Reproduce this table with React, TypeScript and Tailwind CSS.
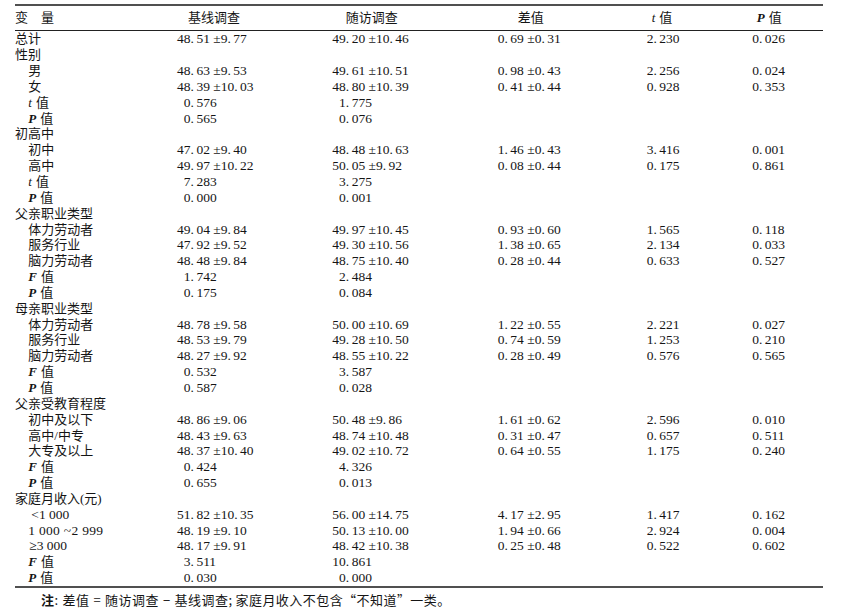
import React from "react";

type Row = {
  label: React.ReactNode;
  indent?: boolean;
  v?: string[];
};

const Stat = ({ s }: { s: "t" | "P" | "F" }) => (
  <span>
    <span className={s === "t" ? "italic" : "italic font-bold"} style={{ fontFamily: "'Liberation Serif', serif" }}>
      {s}
    </span>
    <span className="ml-[4px]">值</span>
  </span>
);

const rows: Row[] = [
  { label: "总计", v: ["48.51 ±9.77", "49.20 ±10.46", "0.69 ±0.31", "2.230", "0.026"] },
  { label: "性别" },
  { label: "男", indent: true, v: ["48.63 ±9.53", "49.61 ±10.51", "0.98 ±0.43", "2.256", "0.024"] },
  { label: "女", indent: true, v: ["48.39 ±10.03", "48.80 ±10.39", "0.41 ±0.44", "0.928", "0.353"] },
  { label: <Stat s="t" />, indent: true, v: ["0.576", "1.775"] },
  { label: <Stat s="P" />, indent: true, v: ["0.565", "0.076"] },
  { label: "初高中" },
  { label: "初中", indent: true, v: ["47.02 ±9.40", "48.48 ±10.63", "1.46 ±0.43", "3.416", "0.001"] },
  { label: "高中", indent: true, v: ["49.97 ±10.22", "50.05 ±9.92", "0.08 ±0.44", "0.175", "0.861"] },
  { label: <Stat s="t" />, indent: true, v: ["7.283", "3.275"] },
  { label: <Stat s="P" />, indent: true, v: ["0.000", "0.001"] },
  { label: "父亲职业类型" },
  { label: "体力劳动者", indent: true, v: ["49.04 ±9.84", "49.97 ±10.45", "0.93 ±0.60", "1.565", "0.118"] },
  { label: "服务行业", indent: true, v: ["47.92 ±9.52", "49.30 ±10.56", "1.38 ±0.65", "2.134", "0.033"] },
  { label: "脑力劳动者", indent: true, v: ["48.48 ±9.84", "48.75 ±10.40", "0.28 ±0.44", "0.633", "0.527"] },
  { label: <Stat s="F" />, indent: true, v: ["1.742", "2.484"] },
  { label: <Stat s="P" />, indent: true, v: ["0.175", "0.084"] },
  { label: "母亲职业类型" },
  { label: "体力劳动者", indent: true, v: ["48.78 ±9.58", "50.00 ±10.69", "1.22 ±0.55", "2.221", "0.027"] },
  { label: "服务行业", indent: true, v: ["48.53 ±9.79", "49.28 ±10.50", "0.74 ±0.59", "1.253", "0.210"] },
  { label: "脑力劳动者", indent: true, v: ["48.27 ±9.92", "48.55 ±10.22", "0.28 ±0.49", "0.576", "0.565"] },
  { label: <Stat s="F" />, indent: true, v: ["0.532", "3.587"] },
  { label: <Stat s="P" />, indent: true, v: ["0.587", "0.028"] },
  { label: "父亲受教育程度" },
  { label: "初中及以下", indent: true, v: ["48.86 ±9.06", "50.48 ±9.86", "1.61 ±0.62", "2.596", "0.010"] },
  { label: "高中/中专", indent: true, v: ["48.43 ±9.63", "48.74 ±10.48", "0.31 ±0.47", "0.657", "0.511"] },
  { label: "大专及以上", indent: true, v: ["48.37 ±10.40", "49.02 ±10.72", "0.64 ±0.55", "1.175", "0.240"] },
  { label: <Stat s="F" />, indent: true, v: ["0.424", "4.326"] },
  { label: <Stat s="P" />, indent: true, v: ["0.655", "0.013"] },
  { label: "家庭月收入(元)" },
  {
    label: <span className="ml-[3px] text-[13.5px]" style={{ fontFamily: "'Liberation Serif', serif" }}>&lt;1 000</span>,
    indent: true,
    v: ["51.82 ±10.35", "56.00 ±14.75", "4.17 ±2.95", "1.417", "0.162"],
  },
  {
    label: <span className="text-[13.5px] tracking-[0.3px]" style={{ fontFamily: "'Liberation Serif', serif" }}>1 000 ~2 999</span>,
    indent: true,
    v: ["48.19 ±9.10", "50.13 ±10.00", "1.94 ±0.66", "2.924", "0.004"],
  },
  {
    label: <span className="ml-[1px] text-[13.5px]" style={{ fontFamily: "'Liberation Serif', serif" }}>≥3 000</span>,
    indent: true,
    v: ["48.17 ±9.91", "48.42 ±10.38", "0.25 ±0.48", "0.522", "0.602"],
  },
  { label: <Stat s="F" />, indent: true, v: ["3.511", "10.861"] },
  { label: <Stat s="P" />, indent: true, v: ["0.030", "0.000"] },
];

const Spaced = ({ s }: { s: string }) => {
  const parts = s.split(".");
  return (
    <>
      {parts.map((p, i) => (
        <React.Fragment key={i}>
          {i > 0 && <span className="mr-[2.5px]">.</span>}
          {p}
        </React.Fragment>
      ))}
    </>
  );
};

const Num = ({ s }: { s?: string }) => {
  if (!s) return <div />;
  const i = s.indexOf(".");
  const int = s.slice(0, i);
  const rest = s.slice(i);
  return (
    <div className="whitespace-pre text-[13.5px]">
      <span className="inline-block w-[13.5px] text-right">{int}</span>
      <Spaced s={rest} />
    </div>
  );
};

const grid = "grid grid-cols-[162px_155.3px_158.7px_149px_105.5px_1fr]";

export default function App() {
  return (
    <div
      lang="zh-CN"
      className="w-[861px] h-[612px] bg-white text-[#151515] pt-[4px] overflow-hidden"
      style={{ fontFamily: "'Liberation Serif', 'Noto Sans CJK SC', serif" }}
    >
      <div className="ml-[15px] w-[808px]">
        <div className="h-[2px] bg-[#505050]" />
        <div className={`${grid} h-[25px] items-center border-b border-[#222] text-[13px]`}>
          <div>变　量</div>
          <div className="pl-[11px]">基线调查</div>
          <div className="pl-[13.4px]">随访调查</div>
          <div className="pl-[26.7px]">差值</div>
          <div className="pl-[11.7px]">
            <Stat s="t" />
          </div>
          <div className="pl-[11.2px]">
            <Stat s="P" />
          </div>
        </div>
        <div>
          {rows.map((r, idx) => (
            <div key={idx} className={`${grid} h-[15.85px] items-center leading-[15px]`}>
              <div className={`text-[13px] whitespace-pre ${r.indent ? "pl-[13.3px]" : ""}`}>{r.label}</div>
              <Num s={r.v?.[0]} />
              <Num s={r.v?.[1]} />
              <Num s={r.v?.[2]} />
              <Num s={r.v?.[3]} />
              <Num s={r.v?.[4]} />
            </div>
          ))}
        </div>
        <div className="h-[2px] bg-[#505050]" />
        <div
          className="mt-[4px] ml-[26px] text-[13px] leading-[16px] whitespace-pre tracking-[0.45px]"
          style={{ fontFamily: "'Noto Sans CJK SC', sans-serif" }}
        >
          <span className="font-bold">注</span>
          <span className="mr-[4px]">:</span>差值<span className="mx-[4px]">=</span>随访调查<span className="mx-[4px]">−</span>基线调查<span className="mr-[3px]">;</span>家庭月收入不包含“不知道”一类。
        </div>
      </div>
    </div>
  );
}
